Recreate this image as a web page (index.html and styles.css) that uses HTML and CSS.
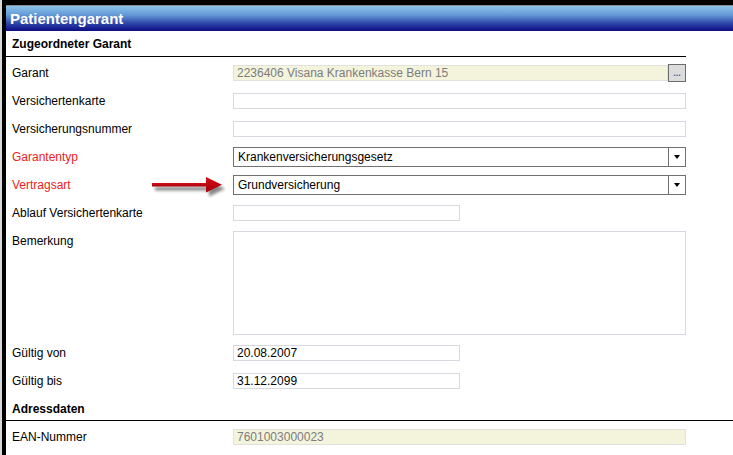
FILE: index.html
```html
<!DOCTYPE html>
<html lang="de">
<head>
    <meta charset="UTF-8">
    <title>Patientengarant</title>
    <link rel="stylesheet" href="styles.css">
</head>
<body>
    <div class="frame">
        <div class="titlebar">Patientengarant</div>

        <div class="section">
            <div class="section-title">Zugeordneter Garant</div>

            <div class="row">
                <label>Garant</label>
                <div class="field-group">
                    <input class="field readonly garant" type="text" value="2236406 Visana Krankenkasse Bern 15" readonly>
                    <button class="lookup">...</button>
                </div>
            </div>
            <div class="row">
                <label>Versichertenkarte</label>
                <input class="field wide" type="text">
            </div>
            <div class="row">
                <label>Versicherungsnummer</label>
                <input class="field wide" type="text">
            </div>
            <div class="row">
                <label class="required">Garantentyp</label>
                <div class="combo">
                    <span class="combo-text">Krankenversicherungsgesetz</span>
                    <span class="combo-arrow"></span>
                </div>
            </div>
            <div class="row">
                <label class="required">Vertragsart</label>
                <div class="combo">
                    <span class="combo-text">Grundversicherung</span>
                    <span class="combo-arrow"></span>
                </div>
            </div>
            <div class="row">
                <label>Ablauf Versichertenkarte</label>
                <input class="field short" type="text">
            </div>
            <div class="row row-tall">
                <label>Bemerkung</label>
                <textarea class="memo"></textarea>
            </div>
            <div class="row">
                <label>Gültig von</label>
                <input class="field short" type="text" value="20.08.2007">
            </div>
            <div class="row">
                <label>Gültig bis</label>
                <input class="field short" type="text" value="31.12.2099">
            </div>
        </div>

        <div class="section">
            <div class="section-title full">Adressdaten</div>
            <div class="row">
                <label>EAN-Nummer</label>
                <input class="field wide readonly" type="text" value="7601003000023" readonly>
            </div>
        </div>

        <!-- Pfeil auf Vertragsart -->
        <svg class="marker" width="90" height="30" viewBox="0 0 90 30">
            <defs>
                <filter id="blur" x="-20%" y="-50%" width="140%" height="200%">
                    <feGaussianBlur stdDeviation="1.6"/>
                </filter>
                <linearGradient id="red" x1="0" y1="0" x2="0" y2="1">
                    <stop offset="0" stop-color="#d2101a"/>
                    <stop offset="1" stop-color="#a8000a"/>
                </linearGradient>
            </defs>
            <g filter="url(#blur)" fill="#555" opacity="0.7" transform="translate(3,4)">
                <rect x="2" y="8" width="58" height="3.5"/>
                <polygon points="56,2 72,9.75 56,17.5"/>
            </g>
            <rect x="2" y="8" width="58" height="3.5" fill="url(#red)"/>
            <polygon points="56,2 72,9.75 56,17.5" fill="url(#red)"/>
        </svg>
    </div>
</body>
</html>
```

FILE: styles.css
```css
* {
    margin: 0;
    padding: 0;
    box-sizing: border-box;
}

body {
    font-family: "Liberation Sans", Arial, sans-serif;
    font-size: 12px;
    color: #000;
    background-color: #d8d8d8;
    overflow: hidden;
}

.frame {
    position: relative;
    margin-left: 2px;
    height: 455px;
    background-color: #fff;
    border-top: 5px solid #000;
    border-left: 4px solid #000;
}

.titlebar {
    height: 26px;
    padding-left: 4px;
    line-height: 25px;
    font-size: 15px;
    font-weight: bold;
    color: #fff;
    border-top: 1px solid #8a8a8a;
    background: linear-gradient(to bottom, #8cc4ea 0%, #649ad6 35%, #2e44a8 70%, #0c0c84 100%);
}

.section-title {
    width: 680px;
    padding: 2px 0 0 6px;
    line-height: 23px;
    font-weight: bold;
    border-bottom: 1px solid #000;
}

.section-title.full {
    width: auto;
    padding-top: 3px;
    line-height: 22px;
}

.row {
    display: flex;
    align-items: center;
    height: 28px;
    margin-top: 2px;
    padding-left: 6px;
}

.row + .row {
    margin-top: 0;
}

.row label {
    width: 221px;
    flex-shrink: 0;
}

.row label.required {
    color: #ee1c1c;
}

.row-tall {
    height: 112px;
    align-items: flex-start;
}

.row-tall label {
    line-height: 28px;
}

.field {
    height: 16px;
    padding: 0 3px;
    font-family: inherit;
    font-size: 12px;
    color: #000;
    border: 1px solid #d8d8e0;
    background-color: #fff;
    outline: none;
}

.field.wide {
    width: 453px;
}

.field.short {
    width: 227px;
}

.field.readonly {
    color: #7c7c7c;
    background-color: #f4f4dc;
    border-color: #e2e2dc;
}

.field-group {
    display: flex;
    align-items: center;
    width: 453px;
}

.field.garant {
    flex: 1;
}

.lookup {
    width: 18px;
    height: 18px;
    font-family: inherit;
    font-size: 9px;
    font-weight: bold;
    line-height: 12px;
    color: #4060a0;
    background-color: #dcdcdc;
    border: 1px solid #6c6c6c;
}

.combo {
    display: flex;
    width: 453px;
    height: 20px;
    border: 1px solid #707070;
}

.combo-text {
    flex: 1;
    padding-left: 4px;
    line-height: 18px;
}

.combo-arrow {
    position: relative;
    width: 17px;
    border-left: 1px solid #707070;
}

.combo-arrow::after {
    content: "";
    position: absolute;
    left: 5px;
    top: 7px;
    border-left: 3.5px solid transparent;
    border-right: 3.5px solid transparent;
    border-top: 4px solid #000;
}

.memo {
    width: 453px;
    height: 104px;
    margin-top: 4px;
    border: 1px solid #d8d8e0;
    resize: none;
    outline: none;
    overflow: hidden;
}

.marker {
    position: absolute;
    left: 144px;
    top: 170px;
}
```
